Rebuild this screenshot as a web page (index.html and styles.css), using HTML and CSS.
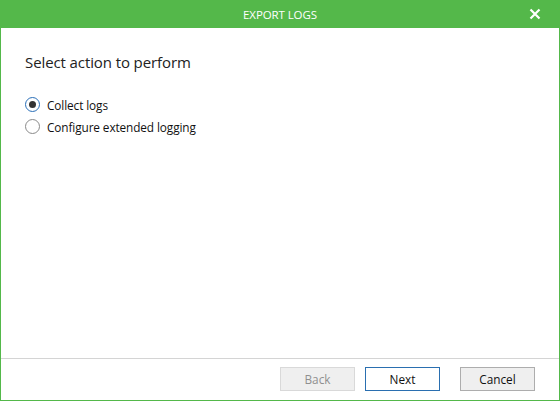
FILE: index.html
```html
<!DOCTYPE html>
<html>
<head>
<meta charset="utf-8">
<link rel="stylesheet" href="styles.css">
</head>
<body>
<div class="window">
  <div class="titlebar">
    <span class="title">EXPORT LOGS</span>
    <svg class="close" width="12" height="12" viewBox="0 0 12 12"><path d="M1.5 1.5 L10.5 10.5 M10.5 1.5 L1.5 10.5" stroke="#fff" stroke-width="2.2" fill="none"/></svg>
  </div>
  <div class="content">
    <h1 class="heading">Select action to perform</h1>
    <div class="options">
      <label class="option"><span class="radio checked"></span>Collect logs</label>
      <label class="option"><span class="radio"></span>Configure extended logging</label>
    </div>
  </div>
  <div class="footer">
    <button class="btn disabled">Back</button>
    <button class="btn primary">Next</button>
    <button class="btn cancel">Cancel</button>
  </div>
</div>
</body>
</html>
```

FILE: styles.css
```css
* { box-sizing: border-box; }
html, body { margin: 0; padding: 0; }
body {
  width: 560px;
  height: 401px;
  font-family: "Open Sans", "Noto Sans", sans-serif;
  background: #fff;
}
.window {
  width: 560px;
  height: 401px;
  border: 1px solid #54b84a;
  border-top: none;
  display: flex;
  flex-direction: column;
}
.titlebar {
  height: 28px;
  margin: 0 -1px;
  background: #54b84a;
  display: flex;
  align-items: center;
  justify-content: center;
  position: relative;
}
.title {
  color: #fff;
  font-size: 11.5px;
  letter-spacing: -0.1px;
}
.close {
  position: absolute;
  right: 19px;
  top: 8px;
}
.content {
  flex: 1;
  padding: 24px 0 0 24px;
}
.heading {
  margin: 0;
  font-weight: normal;
  font-size: 15px;
  color: #222;
  letter-spacing: -0.1px;
}
.options {
  margin-top: 24px;
  display: flex;
  flex-direction: column;
  gap: 5px;
}
.option {
  display: flex;
  align-items: center;
  font-size: 11.8px;
  color: #111;
  height: 17px;
  letter-spacing: -0.1px;
}
.radio {
  width: 15px;
  height: 15px;
  border: 1px solid #8a8a8a;
  border-radius: 50%;
  margin-right: 7px;
  display: flex;
  align-items: center;
  justify-content: center;
  background: #fff;
}
.radio.checked {
  border-color: #2a6fb8;
}
.radio.checked::after {
  content: "";
  width: 7px;
  height: 7px;
  border-radius: 50%;
  background: #333;
}
.footer {
  height: 42px;
  border-top: 1px solid #d4d4d4;
  display: flex;
  align-items: flex-start;
  padding: 8px 0 0 279px;
}
.btn {
  width: 75px;
  height: 24px;
  font-family: "Open Sans", "Noto Sans", sans-serif;
  font-size: 11.8px;
  background: #efefef;
  border: 1px solid #adadad;
  color: #111;
  padding: 0;
}
.btn.disabled {
  color: #8f8f8f;
  border-color: #d9d9d9;
  background: #efefef;
}
.btn.primary {
  margin-left: 10px;
  border-color: #2a6fb0;
  background: #fff;
}
.btn.cancel {
  margin-left: 20px;
}
```
